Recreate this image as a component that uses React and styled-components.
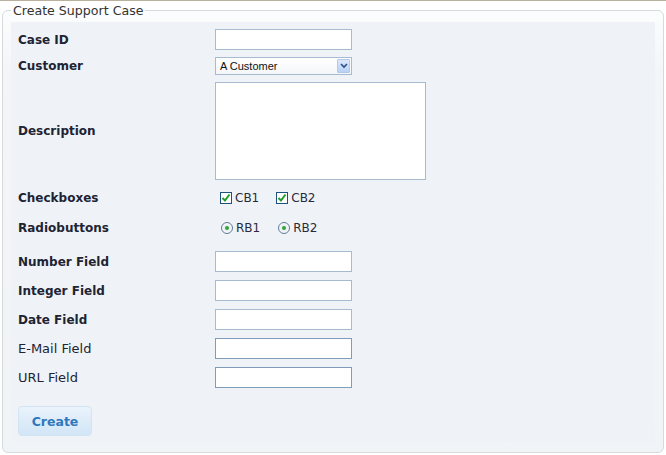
import React from 'react'
import styled, { createGlobalStyle } from 'styled-components'

const GlobalStyle = createGlobalStyle`
	html, body {
		margin: 0;
		padding: 0;
		background: #fff;
	}
	body {
		font-family: 'DejaVu Sans', Verdana, sans-serif;
		color: #222;
	}
`

const Page = styled.div`
	width: 666px;
	height: 455px;
	box-sizing: border-box;
	border-top: 1px solid #b9b19e;
	padding: 2px 0 0 2px;
	overflow: hidden;
`

const Fieldset = styled.fieldset`
	width: 662px;
	height: 450px;
	box-sizing: border-box;
	margin: 0;
	padding: 4px 8px 0 8px;
	border: 1px solid #d6dade;
	border-radius: 6px;
	background: linear-gradient(#fcfdfd, #f3f5f8 60px, #f1f4f7);
`

const Legend = styled.legend`
	padding: 0 2px;
	margin-left: 0;
	font-size: 12.6px;
	line-height: 15px;
	color: #333;
`

const Panel = styled.div`
	background: #eff3f7;
	padding: 3px 0 0 7px;
	height: 420px;
	box-sizing: border-box;
`

const Row = styled.div`
	display: flex;
	align-items: center;
	height: ${p => p.$h || 29}px;
	margin-top: ${p => p.$gap || 0}px;
`

const Label = styled.div`
	width: 197px;
	flex: none;
	font-size: ${p => (p.$plain ? 13 : 12)}px;
	font-weight: ${p => (p.$plain ? 'normal' : 'bold')};
	color: #1e2433;
`

const TextInput = styled.div`
	width: 137px;
	height: 21px;
	box-sizing: border-box;
	background: #fff;
	border: 1px solid ${p => (p.$dark ? '#7f9db9' : '#a7bbd0')};
`

const TextArea = styled(TextInput)`
	width: 211px;
	height: 98px;
`

const Select = styled.div`
	width: 137px;
	height: 18px;
	box-sizing: border-box;
	border: 1px solid #a7bbd0;
	background: linear-gradient(#ffffff, #f4f6f9);
	display: flex;
	align-items: center;
	justify-content: space-between;
	padding: 0 1px 0 4px;
	font-family: 'Liberation Sans', Arial, sans-serif;
	font-size: 11px;
	color: #111;
`

const SelectArrow = styled.div`
	width: 13px;
	height: 14px;
	box-sizing: border-box;
	border: 1px solid #b4c8e8;
	border-radius: 1px;
	background: linear-gradient(#dce8fb, #b9d0f5);
	display: flex;
	align-items: center;
	justify-content: center;
`

const Options = styled.div`
	display: flex;
	align-items: center;
	padding-left: 5px;
	gap: 17px;
`

const Option = styled.label`
	display: flex;
	align-items: center;
	gap: 3px;
	font-size: 12px;
	color: #2a2a3a;
`

const Box = styled.span`
	width: 12px;
	height: 12px;
	box-sizing: border-box;
	border: 1px solid #1c5180;
	background: #fff;
	display: flex;
	align-items: center;
	justify-content: center;
`

const Radio = styled.span`
	width: 12px;
	height: 12px;
	margin-left: 1px;
	box-sizing: border-box;
	border: 1px solid #5e7c97;
	border-radius: 50%;
	background: radial-gradient(circle, #dfe6ee, #ffffff);
	display: flex;
	align-items: center;
	justify-content: center;
	&::after {
		content: '';
		width: 4px;
		height: 4px;
		border-radius: 50%;
		background: #2fa53a;
	}
`

const Button = styled.button`
	margin-top: 15px;
	width: 74px;
	height: 30px;
	border: 1px solid #d2e3f2;
	border-radius: 4px;
	background: linear-gradient(#eaf3fc, #dcebf8 55%, #d2e6f7);
	color: #2f78bd;
	font-family: 'DejaVu Sans', Verdana, sans-serif;
	font-size: 12.5px;
	font-weight: bold;
	padding: 0;
`

const Check = () => (
	<svg width="10" height="10" viewBox="0 0 10 10">
		<path d="M1.5 5 L4 7.5 L8.5 1.5" fill="none" stroke="#1e9e2a" strokeWidth="2" />
	</svg>
)

const Chevron = () => (
	<svg width="8" height="6" viewBox="0 0 8 6">
		<path d="M1 1 L4 4 L7 1" fill="none" stroke="#2a4f8a" strokeWidth="1.6" />
	</svg>
)

export default function App() {
	return (
		<Page>
			<GlobalStyle />
			<Fieldset>
				<Legend>Create Support Case</Legend>
				<Panel>
					<Row>
						<Label>Case ID</Label>
						<TextInput />
					</Row>
					<Row $h={24}>
						<Label>Customer</Label>
						<Select>
							A Customer
							<SelectArrow>
								<Chevron />
							</SelectArrow>
						</Select>
					</Row>
					<Row $h={105}>
						<Label>Description</Label>
						<TextArea />
					</Row>
					<Row $h={30}>
						<Label>Checkboxes</Label>
						<Options>
							<Option><Box><Check /></Box>CB1</Option>
							<Option><Box><Check /></Box>CB2</Option>
						</Options>
					</Row>
					<Row>
						<Label>Radiobuttons</Label>
						<Options>
							<Option><Radio />RB1</Option>
							<Option><Radio />RB2</Option>
						</Options>
					</Row>
					<Row $gap={5}>
						<Label>Number Field</Label>
						<TextInput />
					</Row>
					<Row>
						<Label>Integer Field</Label>
						<TextInput />
					</Row>
					<Row>
						<Label>Date Field</Label>
						<TextInput />
					</Row>
					<Row>
						<Label $plain>E-Mail Field</Label>
						<TextInput $dark />
					</Row>
					<Row $h={28}>
						<Label $plain>URL Field</Label>
						<TextInput $dark />
					</Row>
					<Button>Create</Button>
				</Panel>
			</Fieldset>
		</Page>
	)
}
